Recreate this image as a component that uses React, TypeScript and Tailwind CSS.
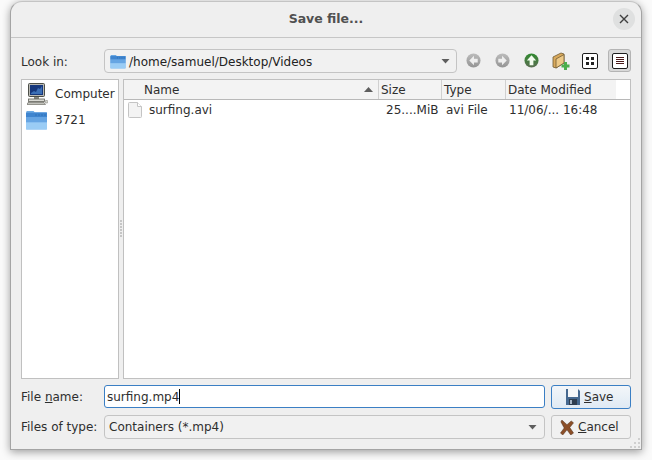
import React from "react";

const Arrow = ({ dir, fill }: { dir: "l" | "r" | "u"; fill: string }) => (
  <svg width="15" height="15" viewBox="0 0 16 16">
    <defs>
      <linearGradient id={`g${dir}`} x1="0" y1="0" x2="0" y2="1">
        <stop offset="0" stopColor={dir === "u" ? "#2f8a2f" : "#bcbcbc"} />
        <stop offset="1" stopColor={fill} />
      </linearGradient>
    </defs>
    <circle cx="8" cy="8" r="7.5" fill={`url(#g${dir})`} />
    {dir === "l" && <path d="M8.500 3 3.500 8l5 5v-3H12.500V6H8.500z" fill="#efefef" />}
    {dir === "r" && <path d="M7.500 3 12.500 8l-5 5v-3H3.500V6h4z" fill="#efefef" />}
    {dir === "u" && <path d="M8 2.500 3 8h3v5h4V8h3z" fill="#f2fbee" />}
  </svg>
);

const Folder = ({ w = 22, h = 20 }: { w?: number; h?: number }) => (
  <svg width={w} height={h} viewBox="0 0 22 20">
    <path d="M1 1h7l1.500 1.500H21v3H1z" fill="#6aa8e2" />
    <rect x="0.500" y="2.500" width="21" height="17" rx="1" fill="#8cc0f0" />
    <rect x="0.500" y="2.500" width="21" height="5" fill="#3f85cf" />
    <rect x="0.500" y="7.500" width="21" height="5" fill="#66a5e3" />
    <rect x="0.500" y="12.500" width="21" height="7" fill="#9accf5" />
    <path d="M10 5h10" stroke="#23609f" strokeDasharray="1 2" />
  </svg>
);

const Computer = () => (
  <svg width="21" height="22" viewBox="0 0 21 22">
    <rect x="1.500" y="0.500" width="16" height="13" rx="1" fill="#b9b9b2" stroke="#4c4e48" />
    <rect x="3" y="2" width="13" height="10" fill="#16377c" />
    <path d="M4 10l3-2 2 1 2-4 2 1 2-3v8H4z" fill="#3c6fb5" />
    <rect x="7" y="14" width="5" height="2" fill="#85857f" />
    <rect x="1.500" y="16" width="16" height="2.500" fill="#d9d9d3" stroke="#5f5f58" strokeWidth="0.8" />
    <path d="M1 19.500h16l1.500 2H0z" fill="#c2c2bc" stroke="#5f5f58" strokeWidth="0.6" />
    <rect x="18" y="17.500" width="3" height="2.500" rx="1" fill="#d6d6d0" stroke="#77776f" strokeWidth="0.5" />
  </svg>
);

const Chevron = () => (
  <svg width="9" height="5" viewBox="0 0 9 5"><path d="M.5 0h8L4.500 4.500z" fill="#5e5e5e" /></svg>
);

const Dots = ({ className }: { className: string }) => (
  <div className={className}>
    <div className="w-[2px] h-[2px] bg-[#c6c6c6]" />
    <div className="w-[2px] h-[2px] bg-[#c6c6c6]" />
    <div className="w-[2px] h-[2px] bg-[#c6c6c6]" />
    <div className="w-[2px] h-[2px] bg-[#c6c6c6]" />
    <div className="w-[2px] h-[2px] bg-[#c6c6c6]" />
    <div className="w-[2px] h-[2px] bg-[#c6c6c6]" />
  </div>
);

const Header = ({ w, label, children }: { w: string; label?: string; children?: React.ReactNode }) => (
  <div className={`${w} h-[19px] flex items-center border-r border-[#d0d0d0]`}>{children ?? label}</div>
);

const GripDot = () => <div className="w-[2px] h-[2px] bg-[#cfcfcf]" />;

export default function App() {
  return (
    <div className="w-[652px] h-[460px] bg-[#fafafa] overflow-hidden text-[12px] text-[#2e2e2e] font-['DejaVu_Sans',sans-serif]">
      <div className="relative ml-[10px] mt-px w-[632px] h-[449px] flex flex-col bg-[#efefef] rounded-t-[12px] border border-[#a4a4a4] border-t-[#c4c4c4] shadow-[0_2px_9px_rgba(0,0,0,0.38)]">
        <div className="h-[36px] shrink-0 border-b border-[#c6c6c6] flex items-center justify-center relative font-bold text-[12.5px] text-[#505050]">
          <span>Save file...</span>
          <div className="absolute right-[6px] top-[6px] w-[22px] h-[22px] rounded-full bg-[#dfe0e0] flex items-center justify-center">
            <svg width="10" height="10" viewBox="0 0 10 10"><path d="M1 1l8 8M9 1l-8 8" stroke="#3f3f3f" strokeWidth="1.4" /></svg>
          </div>
        </div>

        <div className="flex-1 flex flex-col px-[10px] pt-[11px] min-h-0">
          <div className="h-[24px] flex items-center shrink-0">
            <span className="w-[83px] pt-px">Look in:</span>
            <div className="w-[353px] h-[24px] border border-[#c4c4c4] rounded-[4px] bg-[#f1f1f1] flex items-center pl-[5px] pr-[6px]">
              <Folder w={16} h={15} />
              <span className="ml-[3px] flex-1 text-[#222] pt-px">/home/samuel/Desktop/Videos</span>
              <Chevron />
            </div>
            <div className="flex items-center ml-[9px] -mt-px">
              <Arrow dir="l" fill="#949494" />
              <div className="w-[14px]" />
              <Arrow dir="r" fill="#949494" />
              <div className="w-[14px]" />
              <Arrow dir="u" fill="#5b6e52" />
              <div className="w-[13px]" />
              <svg width="18" height="18" viewBox="0 0 18 18">
                <path d="M1 5l8-4 3 1v9l-8 5-3-1z" fill="#d9a95c" stroke="#6e5a34" strokeWidth="0.8" />
                <path d="M4 16V7l8-4.500V11z" fill="#edc987" stroke="#6e5a34" strokeWidth="0.8" />
                <path d="M12 10h3v2.500h2.500v3H15V18h-3v-2.500H9.500v-3H12z" fill="#4cae4c" />
              </svg>
              <div className="w-[12px]" />
              <div className="w-[16px] h-[16px] bg-white border border-[#1c1c1c] rounded-[2px] grid grid-cols-2 gap-[2px] p-[3px]">
                <div className="bg-[#222]" /><div className="bg-[#222]" /><div className="bg-[#222]" /><div className="bg-[#222]" />
              </div>
              <div className="ml-[10px] w-[23px] h-[23px] border border-[#b4b4b4] bg-[#d8d8d8] rounded-[3px] flex items-center justify-center">
                <div className="w-[16px] h-[16px] bg-white border border-[#1c1c1c] rounded-[2px] flex flex-col justify-center gap-px px-[3px]">
                  <div className="h-px bg-[#4a1a1a]" /><div className="h-px bg-[#4a1a1a]" /><div className="h-px bg-[#4a1a1a]" /><div className="h-px bg-[#4a1a1a]" />
                </div>
              </div>
            </div>
          </div>

          <div className="flex mt-[6px] h-[300px] shrink-0">
            <div className="w-[98px] bg-white border border-[#c0c0c0] pt-[2px] h-[300px]">
              <div className="flex items-center h-[24px]">
                <div className="w-[30px] flex justify-center"><Computer /></div>
                <span className="ml-[3px]">Computer</span>
              </div>
              <div className="flex items-center h-[20px] mt-[4px]">
                <div className="w-[29px] flex justify-center"><Folder w={23} h={20} /></div>
                <span className="ml-[4px]">3721</span>
              </div>
            </div>
            <div className="w-[4px] flex items-center justify-center pb-[2px]">
              <Dots className="flex flex-col gap-px" />
            </div>
            <div className="w-[508px] bg-white border border-[#c0c0c0] h-[300px]">
              <div className="flex border-b border-[#b8b8b8] h-[20px]">
                <div className="flex bg-[#f3f3f3] w-[492px]">
                  <Header w="w-[255px] pl-[20px] pr-[5px] justify-between">
                    <span>Name</span>
                    <svg width="9" height="5" viewBox="0 0 9 5"><path d="M0 5h9L4.500 0z" fill="#5e5e5e" /></svg>
                  </Header>
                  <Header w="w-[63px] pl-[2px]" label="Size" />
                  <Header w="w-[64px] pl-[2px]" label="Type" />
                  <Header w="w-[110px] pl-[2px] border-r-0" label="Date Modified" />
                </div>
              </div>
              <div className="flex items-center h-[19px]">
                <div className="w-[255px] flex items-center pl-[4px]">
                  <svg width="14" height="16" viewBox="0 0 14 16">
                    <path d="M1.500.5h8l4 4v10a1 1 0 0 1-1 1h-11a1 1 0 0 1-1-1v-13a1 1 0 0 1 1-1z" fill="#f3f3f3" stroke="#c4c4c4" />
                    <path d="M9.500.5v4h4" fill="#fff" stroke="#c4c4c4" />
                  </svg>
                  <span className="ml-[7px]">surfing.avi</span>
                </div>
                <div className="w-[63px] pl-[7px] whitespace-nowrap">25....MiB</div>
                <div className="w-[64px] pl-[4px]">avi File</div>
                <div className="w-[110px] pl-[3px] whitespace-nowrap">11/06/... 16:48</div>
              </div>
            </div>
          </div>

          <div className="flex items-start mt-[6px] h-[24px] shrink-0">
            <span className="w-[83px] h-[23px] flex items-center"><span>File <u>n</u>ame:</span></span>
            <div className="w-[441px] h-[23px] bg-white border border-[#3b7fc4] rounded-[3px] flex items-center pl-[2px]">
              <span>surfing.mp4</span><span className="w-px h-[15px] bg-black" />
            </div>
            <div className="ml-[6px] w-[80px] h-[24px] border border-[#3b7fc4] rounded-[3px] bg-gradient-to-b from-[#f3f6f9] to-[#dfeaf4] flex items-center pl-[14px]">
              <svg width="14" height="16" viewBox="0 0 14 16">
                <path d="M0 0h12l2 2v14H0z" fill="#45688f" />
                <rect x="2" y="0" width="10" height="8" fill="#f4f6f8" />
                <rect x="3" y="10" width="8" height="6" fill="#2e3d4f" />
                <rect x="4" y="11" width="2" height="4" fill="#a7b6c6" />
              </svg>
              <span className="ml-[4px]"><u>S</u>ave</span>
            </div>
          </div>

          <div className="flex items-center mt-[6px] h-[24px] shrink-0">
            <span className="w-[83px]">Files of type:</span>
            <div className="w-[441px] h-[24px] border border-[#c4c4c4] rounded-[4px] bg-[#f1f1f1] flex items-center pl-[4px] pr-[7px] justify-between">
              <span>Containers (*.mp4)</span>
              <Chevron />
            </div>
            <div className="ml-[6px] w-[80px] h-[24px] border border-[#c4c4c4] rounded-[3px] bg-[#f1f1f1] flex items-center pl-[8px]">
              <svg width="14" height="15" viewBox="0 0 15 16">
                <path d="M2 0l5.500 5L12 1l2.500 2-4 5 4 6-3 2-4-5.500L3 16l-2.500-2 4-5.500L1 2z" fill="#8c4f28" stroke="#4a2c18" strokeWidth="0.5" />
              </svg>
              <span className="ml-[4px]"><u>C</u>ancel</span>
            </div>
          </div>
        </div>

        <div className="absolute right-[1px] bottom-[1px] grid grid-cols-3 gap-[2px]">
          <div /><div /><GripDot />
          <div /><GripDot /><GripDot />
          <GripDot /><GripDot /><GripDot />
        </div>
      </div>
    </div>
  );
}
